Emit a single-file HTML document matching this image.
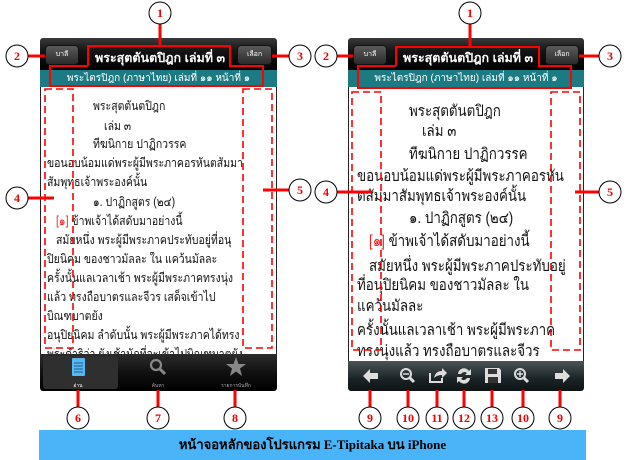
<!DOCTYPE html>
<html><head><meta charset="utf-8"><style>
*{margin:0;padding:0;box-sizing:border-box}
body{width:628px;height:460px;background:#fff;position:relative;overflow:hidden;font-family:"Liberation Sans","Noto Sans CJK SC",sans-serif}
.a{position:absolute}
.hdr{background:linear-gradient(#3a3a3a,#151515 40%,#000);border-radius:3px 3px 0 0}
.btn{background:linear-gradient(#5a5a5a,#2a2a2a);border-radius:4px;border:1px solid #111;color:#fff;font-size:7px;text-align:center;line-height:18px}
.title{color:#fff;font-weight:bold;white-space:nowrap}
.teal{background:#1c7b82;color:#fff;text-align:center;white-space:nowrap}
.txt{background:#fff;border-left:1px solid #222;border-right:1px solid #222;overflow:hidden;color:#111}
.txt div{position:absolute;white-space:nowrap;transform-origin:0 50%}
.l div{transform:scaleX(0.84)}
.r div{transform:scaleX(0.86)}
.blue{background:#4ab4f8;text-align:center;font-family:"Liberation Serif","Noto Serif CJK SC",serif;font-weight:bold;font-size:13px;line-height:30px;color:#000}
</style></head><body>

<!-- LEFT PHONE -->
<div class="a hdr" style="left:40px;top:38px;width:237px;height:32px"></div>
<div class="a btn" style="left:45px;top:45px;width:34px;height:20px">บาลี</div>
<div class="a btn" style="left:237px;top:45px;width:35px;height:20px">เลือก</div>
<div class="a title" style="left:95px;top:48px;font-size:12.5px">พระสุตตันตปิฎก เล่มที่ ๓</div>
<div class="a teal" style="left:40px;top:70px;width:237px;height:17px;font-size:10px;line-height:17px">พระไตรปิฎก (ภาษาไทย) เล่มที่ ๑๑ หน้าที่ ๑</div>
<div class="a txt l" style="left:40px;top:87px;width:237px;height:267px;font-size:12.5px">
<div style="left:52px;top:9px">พระสุตตันตปิฎก</div>
<div style="left:63px;top:29px">เล่ม ๓</div>
<div style="left:52px;top:47px">ทีฆนิกาย ปาฏิกวรรค</div>
<div style="left:6px;top:66px">ขอนอบน้อมแด่พระผู้มีพระภาคอรหันตสัมมา</div>
<div style="left:6px;top:85px">สัมพุทธเจ้าพระองค์นั้น</div>
<div style="left:52px;top:105px">๑. ปาฏิกสูตร (๒๔)</div>
<div style="left:15px;top:124px"><span style="color:#e22">[๑]</span> ข้าพเจ้าได้สดับมาอย่างนี้</div>
<div style="left:15px;top:143px">สมัยหนึ่ง พระผู้มีพระภาคประทับอยู่ที่อนุ</div>
<div style="left:6px;top:162px">ปิยนิคม ของชาวมัลละ ใน แคว้นมัลละ</div>
<div style="left:6px;top:181px">ครั้งนั้นแลเวลาเช้า พระผู้มีพระภาคทรงนุ่ง</div>
<div style="left:6px;top:200px">แล้ว ทรงถือบาตรและจีวร เสด็จเข้าไป</div>
<div style="left:6px;top:219px">บิณฑบาตยัง</div>
<div style="left:6px;top:238px">อนุปิยนิคม ลำดับนั้น พระผู้มีพระภาคได้ทรง</div>
<div style="left:6px;top:257px">พระดำริว่า ยังเช้านักที่จะเข้าไปบิณฑบาตยัง</div>
</div>
<div class="a" style="left:40px;top:354px;width:237px;height:37px;background:linear-gradient(#2c2c2c,#111 50%,#000);border-radius:0 0 3px 3px"></div>
<div class="a" style="left:43px;top:356px;width:75px;height:33px;background:#2f2f2f;border-radius:3px"></div>
<svg class="a" style="left:40px;top:354px" width="237" height="37">
<rect x="32" y="4" width="13" height="18" fill="#5ab6ef" rx="1"/>
<g stroke="#1a5f9a" stroke-width="1"><line x1="34" y1="9" x2="43" y2="9"/><line x1="34" y1="12" x2="43" y2="12"/><line x1="34" y1="15" x2="43" y2="15"/><line x1="34" y1="18" x2="43" y2="18"/></g>
<circle cx="116" cy="11" r="5" fill="none" stroke="#888" stroke-width="2.2"/><line x1="120" y1="15" x2="125" y2="20" stroke="#888" stroke-width="3"/>
<polygon points="196,3 198.5,10 206,10 200,14.5 202,22 196,17.5 190,22 192,14.5 186,10 193.5,10" fill="#888"/>
<text x="38" y="33" font-size="5" fill="#fff" text-anchor="middle">อ่าน</text>
<text x="118" y="33" font-size="5" fill="#aaa" text-anchor="middle">ค้นหา</text>
<text x="196" y="33" font-size="5" fill="#aaa" text-anchor="middle">รายการบันทึก</text>
</svg>

<!-- RIGHT PHONE -->
<div class="a hdr" style="left:348px;top:38px;width:236px;height:32px"></div>
<div class="a btn" style="left:353px;top:45px;width:34px;height:20px">บาลี</div>
<div class="a btn" style="left:545px;top:45px;width:34px;height:20px">เลือก</div>
<div class="a title" style="left:403px;top:48px;font-size:12.5px">พระสุตตันตปิฎก เล่มที่ ๓</div>
<div class="a teal" style="left:348px;top:70px;width:236px;height:17px;font-size:10px;line-height:17px">พระไตรปิฎก (ภาษาไทย) เล่มที่ ๑๑ หน้าที่ ๑</div>
<div class="a txt r" style="left:348px;top:87px;width:236px;height:274px;font-size:15.5px">
<div style="left:60px;top:11px">พระสุตตันตปิฎก</div>
<div style="left:73px;top:31px">เล่ม ๓</div>
<div style="left:60px;top:54px">ทีฆนิกาย ปาฏิกวรรค</div>
<div style="left:8px;top:76px">ขอนอบน้อมแด่พระผู้มีพระภาคอรหัน</div>
<div style="left:8px;top:96px">ตสัมมาสัมพุทธเจ้าพระองค์นั้น</div>
<div style="left:60px;top:118px">๑. ปาฏิกสูตร (๒๔)</div>
<div style="left:20px;top:141px"><span style="color:#e22">[๑]</span> ข้าพเจ้าได้สดับมาอย่างนี้</div>
<div style="left:20px;top:166px">สมัยหนึ่ง พระผู้มีพระภาคประทับอยู่</div>
<div style="left:8px;top:185px">ที่อนุปิยนิคม ของชาวมัลละ ใน</div>
<div style="left:8px;top:206px">แคว้นมัลละ</div>
<div style="left:8px;top:230px">ครั้งนั้นแลเวลาเช้า พระผู้มีพระภาค</div>
<div style="left:8px;top:251px">ทรงนุ่งแล้ว ทรงถือบาตรและจีวร</div>
</div>
<div class="a" style="left:348px;top:361px;width:236px;height:30px;background:linear-gradient(#4a5558,#1a2326 60%,#0d1416);border-radius:0 0 3px 3px"></div>
<svg class="a" style="left:348px;top:361px" width="236" height="30" fill="#ddd" stroke="#ddd">
<polygon points="15,15 22,8 22,12 30,12 30,18 22,18 22,22" stroke="none"/>
<circle cx="58" cy="13" r="5" fill="none" stroke-width="2"/><line x1="62" y1="17" x2="66" y2="21" stroke-width="3"/><line x1="55" y1="13" x2="61" y2="13" stroke-width="1.5"/>
<path d="M82 12v9h12v-4" fill="none" stroke-width="2"/><path d="M86 17c1-5 4-7 8-7v-3l5 5-5 5v-3c-3 0-6 1-8 3z" stroke="none"/>
<path d="M110 13a6 6 0 0 1 11-3l2-2v6h-6l2-2a4 4 0 0 0-6 1z M122 17a6 6 0 0 1-11 3l-2 2v-6h6l-2 2a4 4 0 0 0 6-1z" stroke="none"/>
<path d="M137 7h14l2 2v13h-16z" stroke="none"/><rect x="140" y="8" width="9" height="5" fill="#333" stroke="none"/><rect x="140" y="16" width="10" height="6" fill="#333" stroke="none"/>
<circle cx="172" cy="13" r="5" fill="none" stroke-width="2"/><line x1="176" y1="17" x2="180" y2="21" stroke-width="3"/><line x1="169" y1="13" x2="175" y2="13" stroke-width="1.5"/><line x1="172" y1="10" x2="172" y2="16" stroke-width="1.5"/>
<polygon points="222,15 215,8 215,12 207,12 207,18 215,18 215,22" stroke="none"/>
</svg>

<div class="a blue" style="left:39px;top:430px;width:547px;height:30px">หน้าจอหลักของโปรแกรม E-Tipitaka บน iPhone</div>

<!-- ANNOTATIONS -->
<svg class="a" style="left:0;top:0" width="628" height="460">
<g fill="none" stroke="#f00" stroke-width="2">
<polyline points="88,66 88,46 230,46 230,66 263,66 263,86 50,86 50,66 88,66"/>
<polyline points="396,66 396,47 539,47 539,66 571,66 571,88 358,88 358,66 396,66"/>
<line x1="160" y1="24" x2="160" y2="46" stroke-width="3"/>
<line x1="470" y1="24" x2="470" y2="47" stroke-width="3"/>
<line x1="28" y1="56" x2="45" y2="56" stroke-width="3"/><line x1="289" y1="56" x2="272" y2="56" stroke-width="3"/>
<line x1="337" y1="56" x2="353" y2="56" stroke-width="3"/><line x1="599" y1="56" x2="579" y2="56" stroke-width="3"/>
<line x1="28" y1="198" x2="54" y2="198" stroke-width="3"/><line x1="289" y1="190" x2="263" y2="190" stroke-width="3"/>
<line x1="337" y1="192" x2="372" y2="192" stroke-width="3"/><line x1="599" y1="192" x2="575" y2="192" stroke-width="3"/>
<g stroke-dasharray="7,4" stroke-width="1.6">
<rect x="45" y="89" width="28" height="259"/><rect x="243" y="89" width="29" height="259"/>
<rect x="352" y="92" width="29" height="258"/><rect x="551" y="92" width="29" height="258"/>
</g>
<g stroke-width="3">
<line x1="78" y1="390" x2="78" y2="407"/><line x1="158" y1="390" x2="158" y2="407"/><line x1="235" y1="390" x2="235" y2="407"/>
<line x1="370" y1="390" x2="370" y2="407"/><line x1="408" y1="390" x2="408" y2="407"/><line x1="437" y1="390" x2="437" y2="407"/><line x1="464" y1="390" x2="464" y2="407"/><line x1="492" y1="390" x2="492" y2="407"/><line x1="523" y1="390" x2="523" y2="407"/><line x1="560" y1="390" x2="560" y2="407"/>
</g>
</g>
<g fill="#fff" stroke="#000" stroke-width="1">
<circle cx="160" cy="13" r="11"/><circle cx="17" cy="56" r="11"/><circle cx="300" cy="56" r="11"/><circle cx="17" cy="198" r="11"/><circle cx="300" cy="190" r="11"/>
<circle cx="470" cy="13" r="11"/><circle cx="326" cy="56" r="11"/><circle cx="610" cy="56" r="11"/><circle cx="326" cy="192" r="11"/><circle cx="610" cy="192" r="11"/>
<circle cx="78" cy="418" r="11"/><circle cx="158" cy="418" r="11"/><circle cx="235" cy="418" r="11"/>
<circle cx="370" cy="418" r="11"/><circle cx="408" cy="418" r="11"/><circle cx="437" cy="418" r="11"/><circle cx="464" cy="418" r="11"/><circle cx="492" cy="418" r="11"/><circle cx="523" cy="418" r="11"/><circle cx="560" cy="418" r="11"/>
</g>
<g fill="#e00" font-family="Liberation Serif,serif" font-weight="bold" font-size="12" text-anchor="middle">
<text x="160" y="17">1</text><text x="17" y="60">2</text><text x="300" y="60">3</text><text x="17" y="202">4</text><text x="300" y="194">5</text>
<text x="470" y="17">1</text><text x="326" y="60">2</text><text x="610" y="60">3</text><text x="326" y="196">4</text><text x="610" y="196">5</text>
<text x="78" y="422">6</text><text x="158" y="422">7</text><text x="235" y="422">8</text>
<text x="370" y="422">9</text><text x="408" y="422">10</text><text x="437" y="422">11</text><text x="464" y="422">12</text><text x="492" y="422">13</text><text x="523" y="422">10</text><text x="560" y="422">9</text>
</g>
</svg>
</body></html>
